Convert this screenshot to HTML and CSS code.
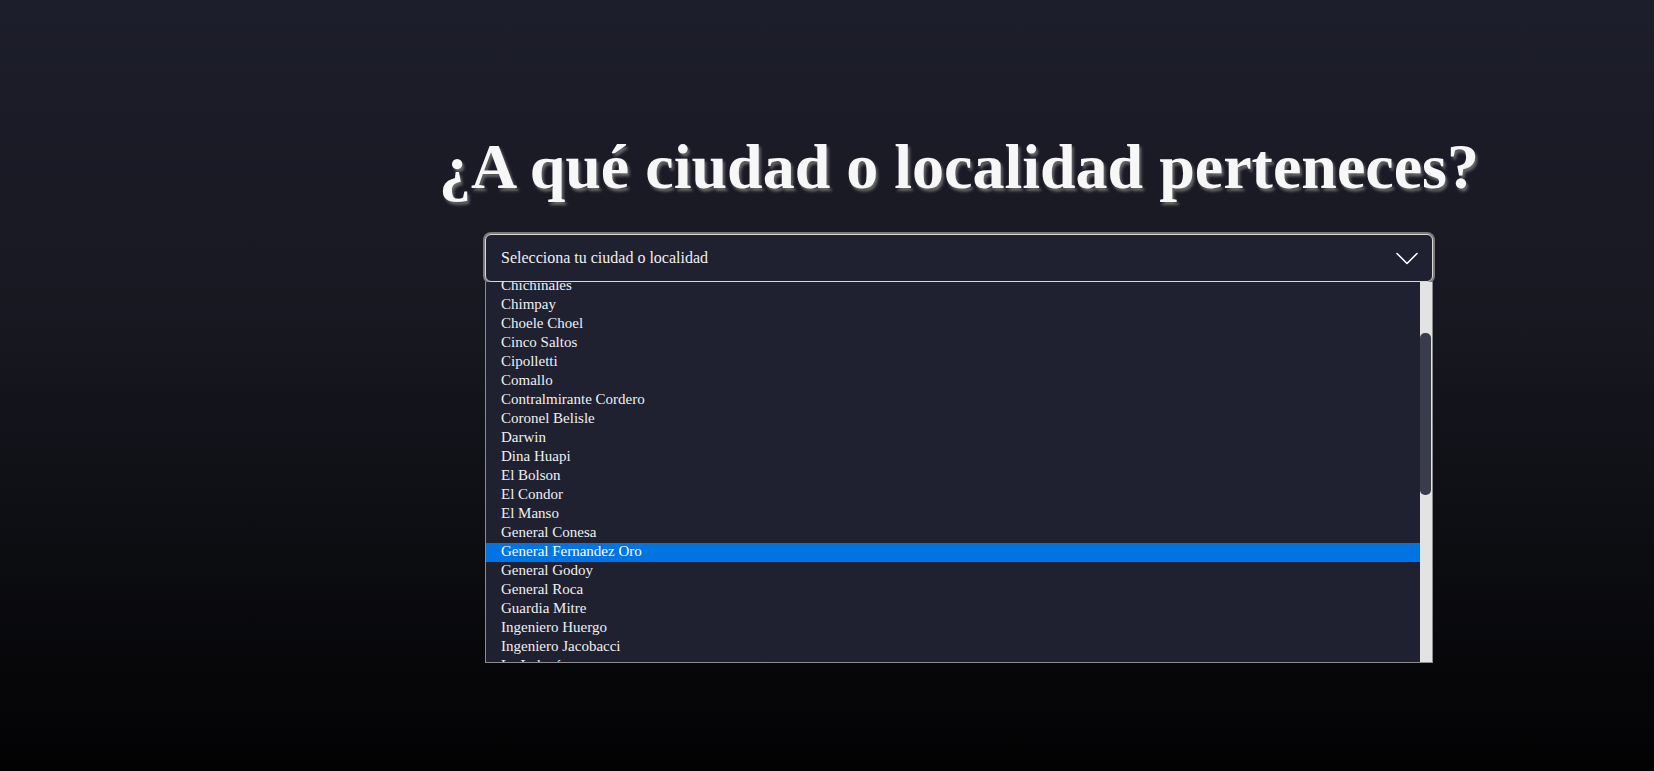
FILE: index.html
```html
<!DOCTYPE html>
<html lang="es">
<head>
<meta charset="utf-8">
<title>Ciudad o localidad</title>
<link rel="stylesheet" href="styles.css">
</head>
<body>
<div class="page">
  <div class="side"></div>
  <main class="main">
    <h1 class="title">¿A qué ciudad o localidad perteneces?</h1>
    <div class="picker">
      <div class="select">
        <span class="select-label">Selecciona tu ciudad o localidad</span>
        <svg class="chevron" width="22" height="13" viewBox="0 0 22 13" aria-hidden="true">
          <polyline points="1,1.5 11,11.5 21,1.5" fill="none" stroke="#ffffff" stroke-width="1.6" stroke-linecap="round" stroke-linejoin="round"/>
        </svg>
      </div>
      <div class="popup">
        <div class="options">
          <ul class="option-list">
            <li class="option">Chichinales</li>
            <li class="option">Chimpay</li>
            <li class="option">Choele Choel</li>
            <li class="option">Cinco Saltos</li>
            <li class="option">Cipolletti</li>
            <li class="option">Comallo</li>
            <li class="option">Contralmirante Cordero</li>
            <li class="option">Coronel Belisle</li>
            <li class="option">Darwin</li>
            <li class="option">Dina Huapi</li>
            <li class="option">El Bolson</li>
            <li class="option">El Condor</li>
            <li class="option">El Manso</li>
            <li class="option">General Conesa</li>
            <li class="option option-active">General Fernandez Oro</li>
            <li class="option">General Godoy</li>
            <li class="option">General Roca</li>
            <li class="option">Guardia Mitre</li>
            <li class="option">Ingeniero Huergo</li>
            <li class="option">Ingeniero Jacobacci</li>
            <li class="option">La Lobería</li>
          </ul>
        </div>
        <div class="scrollbar">
          <div class="thumb"></div>
        </div>
      </div>
    </div>
  </main>
</div>
</body>
</html>
```

FILE: styles.css
```css
html, body {
  margin: 0;
  padding: 0;
}

body {
  min-height: 100vh;
  background: linear-gradient(180deg, #1d1e2b 0%, #16171f 45%, #020203 100%);
  font-family: "Liberation Serif", "Times New Roman", serif;
  color: #f2f2f2;
  overflow: hidden;
}

.page {
  display: flex;
  min-height: 100vh;
}

.side {
  flex: 0 0 264px;
}

.main {
  flex: 1;
  display: flex;
  flex-direction: column;
  align-items: center;
  padding-top: 135px;
}

.title {
  margin: 0 0 35px;
  font-family: "Liberation Serif", "Times New Roman", serif;
  font-weight: bold;
  font-size: 64px;
  line-height: 64px;
  color: #f7f7f7;
  text-shadow: 2px 3px 3px rgba(110, 110, 110, 0.95);
  white-space: nowrap;
}

.picker {
  width: 948px;
  display: flex;
  flex-direction: column;
}

.select {
  box-sizing: border-box;
  height: 48px;
  display: flex;
  align-items: center;
  justify-content: space-between;
  padding: 0 14px 0 15px;
  background: #1f2030;
  border: 1px solid #d8d8d8;
  border-radius: 6px;
  box-shadow: 0 0 0 2px #7b7b7b;
}

.select-label {
  font-size: 16px;
  color: #f0f0f0;
}

.chevron {
  display: block;
  margin-top: 1px;
}

.popup {
  box-sizing: border-box;
  height: 381px;
  display: grid;
  grid-template-columns: 1fr 12px;
  background: #1f2030;
  border: 1px solid #8c8c8c;
  border-top: none;
  overflow: hidden;
}

.options {
  overflow: hidden;
}

.option-list {
  list-style: none;
  margin: -5px 0 0;
  padding: 0;
}

.option {
  box-sizing: border-box;
  height: 19px;
  line-height: 17px;
  padding-left: 15px;
  font-size: 15px;
  color: #f0f0f0;
  white-space: nowrap;
}

.option-active {
  background: #0075e1;
  color: #ffffff;
}

.scrollbar {
  background: #e3e3e3;
  display: flex;
  flex-direction: column;
  padding-top: 51px;
}

.thumb {
  height: 162px;
  margin-right: 1px;
  background: #3a3b4b;
  border-radius: 5px;
}
```
